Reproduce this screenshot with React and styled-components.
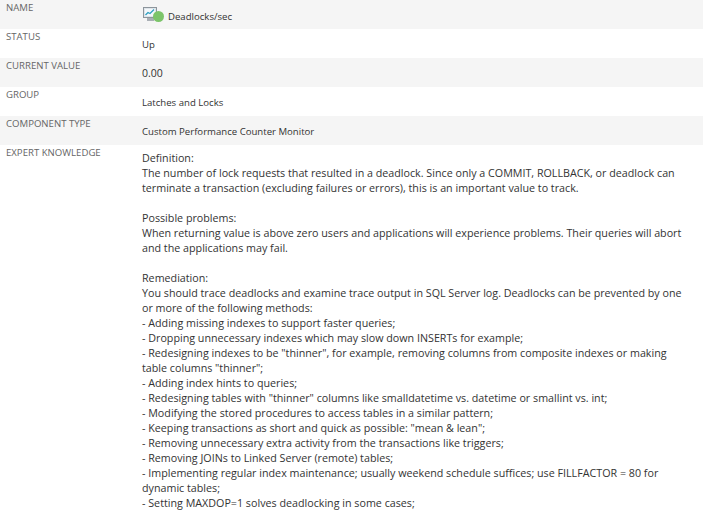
import React from "react";
import styled, { createGlobalStyle } from "styled-components";

const GlobalStyle = createGlobalStyle`
  html, body {
    margin: 0;
    padding: 0;
    background: #fff;
    overflow: hidden;
  }
`;

const Table = styled.div`
  width: 703px;
  height: 519px;
  overflow: hidden;
  font-family: "Open Sans", sans-serif;
`;

const Row = styled.div`
  display: grid;
  grid-template-columns: 142px 1fr;
  height: ${(p) => (p.$auto ? "auto" : "29px")};
  background: ${(p) => (p.$shaded ? "#f5f5f5" : "#fff")};
`;

const Label = styled.div`
  padding: 2px 0 0 6px;
  font-size: 9.6px;
  line-height: 12px;
  color: #666;
`;

const Value = styled.div`
  display: flex;
  align-items: center;
  height: 29px;
  padding-top: 1px;
  box-sizing: border-box;
  font-size: ${(p) => (p.$large ? "10.5px" : "9.6px")};
  color: #333;
`;

const NameText = styled.span`
  padding-top: 2px;
`;

const StatusIcon = styled.span`
  display: inline-flex;
  align-items: flex-start;
  width: 22px;
  height: 18px;
  margin-right: 4px;
`;

const Knowledge = styled.div`
  padding-top: 6px;
  font-size: 10.72px;
  line-height: 15px;
  color: #333;
  width: 550px;
`;

const Paragraph = styled.div`
  margin: 0 0 15px;
`;

const MonitorIcon = () => (
  <svg width="22" height="18" viewBox="0 0 22 18">
    <rect x="1.5" y="1.5" width="13" height="10" fill="#dfe5ea" stroke="#8d959c" />
    <rect x="3" y="3" width="10" height="7" fill="#f4f8fb" />
    <path d="M3.5 9 L6 6.5 L8 7.5 L12 3.5" fill="none" stroke="#2f9fc0" strokeWidth="1.3" />
    <rect x="5" y="12" width="7" height="3" fill="#a9afb5" />
    <circle cx="16.5" cy="10.5" r="5.5" fill="#7cc46a" />
  </svg>
);

const definition = [
  "Definition:",
  "The number of lock requests that resulted in a deadlock. Since only a COMMIT, ROLLBACK, or deadlock can terminate a transaction (excluding failures or errors), this is an important value to track.",
];

const problems = [
  "Possible problems:",
  "When returning value is above zero users and applications will experience problems. Their queries will abort and the applications may fail.",
];

const remediation = [
  "Remediation:",
  "You should trace deadlocks and examine trace output in SQL Server log. Deadlocks can be prevented by one or more of the following methods:",
  "- Adding missing indexes to support faster queries;",
  "- Dropping unnecessary indexes which may slow down INSERTs for example;",
  '- Redesigning indexes to be "thinner", for example, removing columns from composite indexes or making table columns "thinner";',
  "- Adding index hints to queries;",
  '- Redesigning tables with "thinner" columns like smalldatetime vs. datetime or smallint vs. int;',
  "- Modifying the stored procedures to access tables in a similar pattern;",
  '- Keeping transactions as short and quick as possible: "mean & lean";',
  "- Removing unnecessary extra activity from the transactions like triggers;",
  "- Removing JOINs to Linked Server (remote) tables;",
  "- Implementing regular index maintenance; usually weekend schedule suffices; use FILLFACTOR = 80 for dynamic tables;",
  "- Setting MAXDOP=1 solves deadlocking in some cases;",
];

const Lines = ({ lines }) => (
  <Paragraph>
    {lines.map((line) => (
      <div key={line}>{line}</div>
    ))}
  </Paragraph>
);

export default function App() {
  return (
    <>
      <GlobalStyle />
      <Table>
        <Row $shaded>
          <Label>NAME</Label>
          <Value>
            <StatusIcon>
              <MonitorIcon />
            </StatusIcon>
            <NameText>Deadlocks/sec</NameText>
          </Value>
        </Row>
        <Row>
          <Label>STATUS</Label>
          <Value>Up</Value>
        </Row>
        <Row $shaded>
          <Label>CURRENT VALUE</Label>
          <Value $large>0.00</Value>
        </Row>
        <Row>
          <Label>GROUP</Label>
          <Value>Latches and Locks</Value>
        </Row>
        <Row $shaded>
          <Label>COMPONENT TYPE</Label>
          <Value>Custom Performance Counter Monitor</Value>
        </Row>
        <Row $auto>
          <Label>EXPERT KNOWLEDGE</Label>
          <Knowledge>
            <Lines lines={definition} />
            <Lines lines={problems} />
            <Lines lines={remediation} />
          </Knowledge>
        </Row>
      </Table>
    </>
  );
}
